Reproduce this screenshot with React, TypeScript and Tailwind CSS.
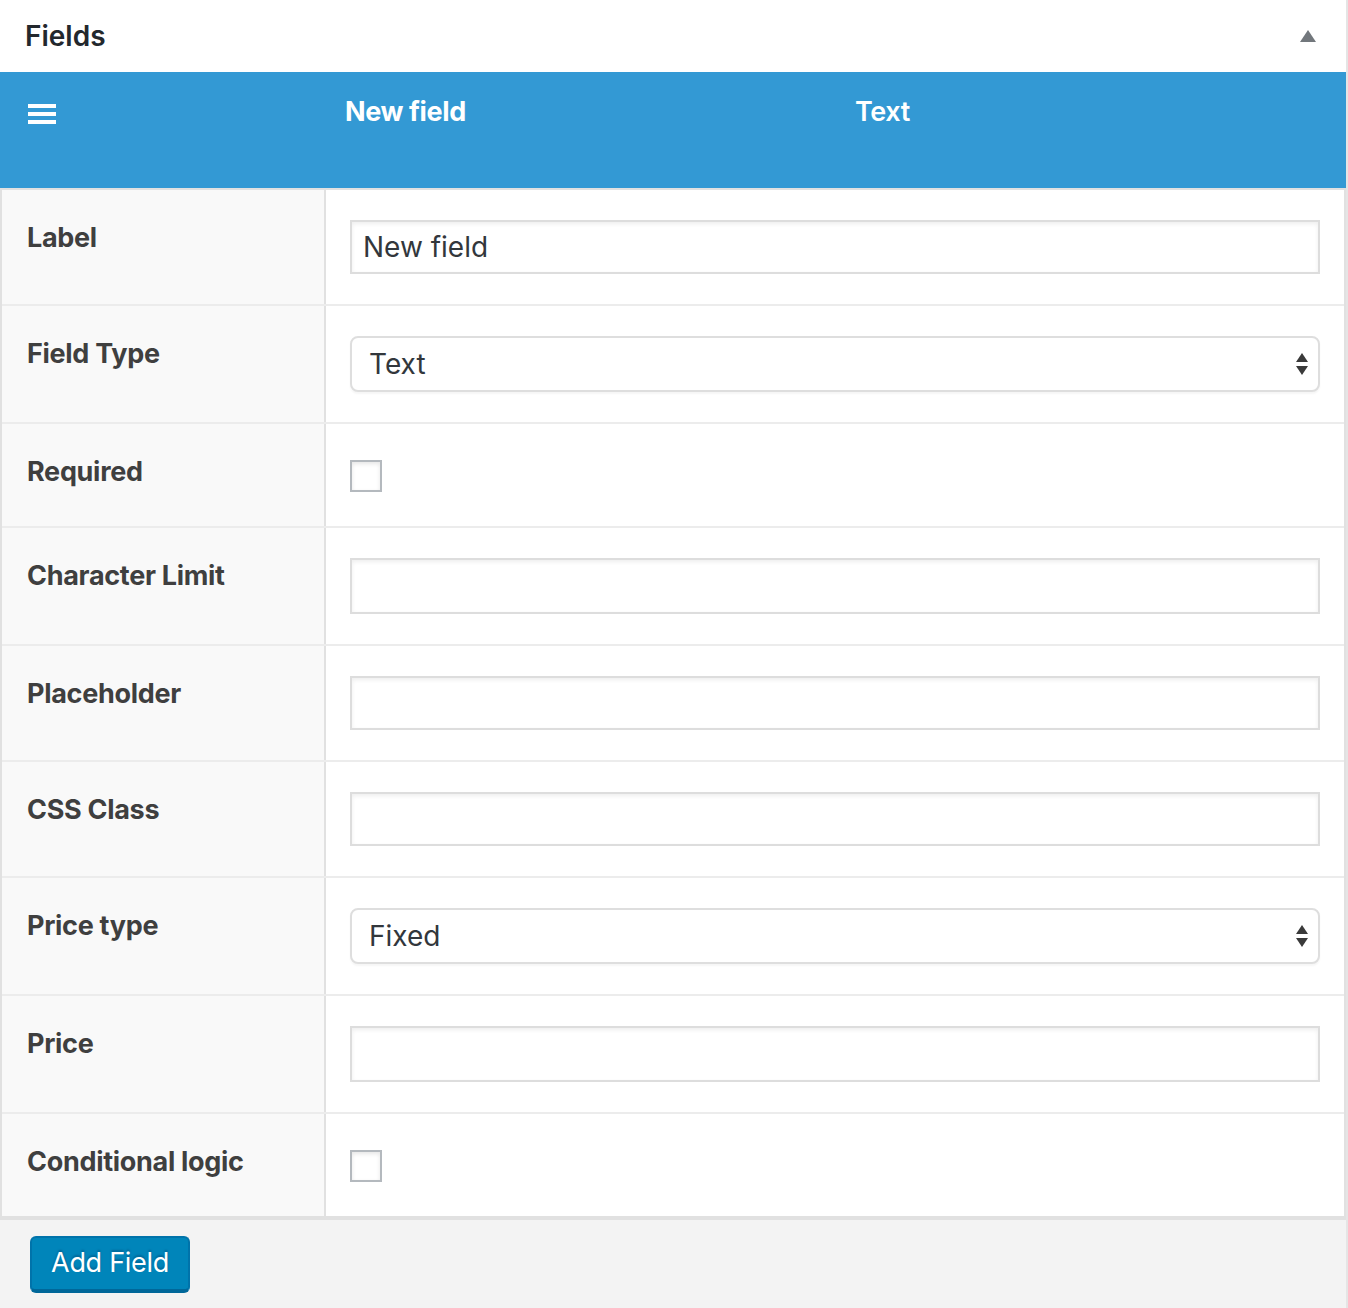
import React from 'react';

const font = { fontFamily: 'Inter, "Noto Sans", sans-serif' };

type Row = { label: string; kind: 'text' | 'select' | 'check'; value?: string; h?: string };

const rows: Row[] = [
  { label: 'Label', kind: 'text', value: 'New field', h: 'h-[54px]' },
  { label: 'Field Type', kind: 'select', value: 'Text' },
  { label: 'Required', kind: 'check' },
  { label: 'Character Limit', kind: 'text', h: 'h-[56px]' },
  { label: 'Placeholder', kind: 'text', h: 'h-[54px]' },
  { label: 'CSS Class', kind: 'text', h: 'h-[54px]' },
  { label: 'Price type', kind: 'select', value: 'Fixed' },
  { label: 'Price', kind: 'text', h: 'h-[56px]' },
  { label: 'Conditional logic', kind: 'check' },
];

const SelectArrows = () => (
  <svg width="12" height="24" viewBox="0 0 12 24" className="shrink-0">
    <polygon points="6,1 12,10 0,10" fill="#3a3a3a" />
    <polygon points="0,14 12,14 6,23" fill="#3a3a3a" />
  </svg>
);

const FieldControl: React.FC<{ row: Row }> = ({ row }) => {
  if (row.kind === 'check') {
    return (
      <div className="h-[42px] pt-[6px]">
        <div className="w-[32px] h-[32px] border-2 border-[#b4b9be] bg-white shadow-[inset_0_2px_4px_rgba(0,0,0,0.1)]" />
      </div>
    );
  }
  if (row.kind === 'select') {
    return (
      <div className="h-[56px] flex items-center justify-between pl-[17px] pr-[10px] border-2 border-[#dedede] rounded-[8px] bg-white shadow-[0_2px_2px_rgba(0,0,0,0.04)] text-[28px] text-[#32373c]">
        <span>{row.value}</span>
        <SelectArrows />
      </div>
    );
  }
  return (
    <div className={`${row.h} flex items-center px-[11px] border-2 border-[#dddddd] bg-white shadow-[inset_0_2px_4px_rgba(0,0,0,0.07)] text-[28px] text-[#32373c]`}>
      {row.value}
    </div>
  );
};

export default function App() {
  return (
    <div style={font} className="w-[1348px] min-h-[1308px] bg-white">
      <div className="w-[1348px] border-r-2 border-[#e5e5e5]">
        {/* header */}
        <div className="h-[72px] flex items-center justify-between pl-[25px] pr-[30px] bg-white">
          <h2 className="text-[28px] font-semibold text-[#23282d] leading-none">Fields</h2>
          <svg width="16" height="12" viewBox="0 0 16 12">
            <polygon points="8,0 16,12 0,12" fill="#72777c" />
          </svg>
        </div>

        {/* blue field bar */}
        <div className="h-[116px] bg-[#3399d4] grid grid-cols-[345px_510px_1fr] pt-[23px] text-white text-[27px] font-bold leading-[34px] tracking-[-0.4px]">
          <div className="pl-[28px] pt-[9px] flex flex-col gap-[4px]">
            <span className="block w-[28px] h-[4px] bg-white" />
            <span className="block w-[28px] h-[4px] bg-white" />
            <span className="block w-[28px] h-[4px] bg-white" />
          </div>
          <div>New field</div>
          <div className="font-semibold">Text</div>
        </div>

        {/* field table */}
        <div className="border-t-2 border-l-2 border-r-2 border-b-4 border-[#e1e1e1]">
          {rows.map((row, i) => (
            <div
              key={row.label}
              className={`flex ${i < rows.length - 1 ? 'border-b-2 border-[#ececec]' : ''}`}
            >
              <div className="w-[324px] shrink-0 bg-[#f9f9f9] border-r-2 border-[#e1e1e1] pl-[25px] pt-[30px] text-[27px] font-bold text-[#3f3f3f] leading-[36px] tracking-[-0.3px]">
                {row.label}
              </div>
              <div className="flex-1 bg-white px-[24px] py-[30px]">
                <FieldControl row={row} />
              </div>
            </div>
          ))}
        </div>

        {/* footer */}
        <div className="h-[88px] bg-[#f3f3f3] pl-[30px] pt-[16px]">
          <button className="h-[57px] w-[160px] rounded-[6px] bg-[#0085ba] border-2 border-[#0073aa] border-b-[4px] border-b-[#006799] text-white text-[27px] tracking-[-0.3px] [text-shadow:0_-2px_2px_#006799]">
            Add Field
          </button>
        </div>
      </div>
    </div>
  );
}
